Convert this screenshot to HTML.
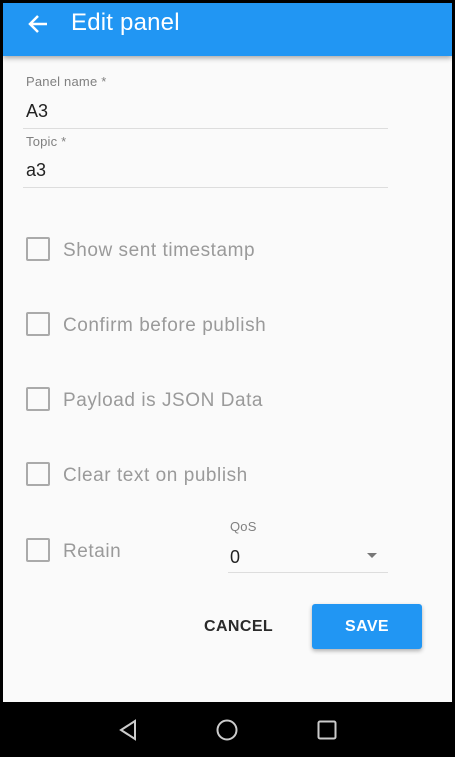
<!DOCTYPE html>
<html><head><style>
*{margin:0;padding:0;box-sizing:border-box}
body{width:455px;height:757px;background:#000;position:relative;overflow:hidden;font-family:"Liberation Sans",sans-serif}
.scr{position:absolute;left:3px;top:3px;width:449px;height:699px;background:#fafafa;overflow:hidden}
.bar{position:absolute;left:0;top:0;width:449px;height:53px;background:#2196f3;box-shadow:0 2px 5px rgba(0,0,0,.35)}
.bar .t{position:absolute;left:68px;top:6px;color:#fff;font-size:24px;letter-spacing:.2px}
.lbl{position:absolute;left:23px;font-size:13px;color:#808080;letter-spacing:.2px}
.val{position:absolute;left:23px;font-size:18px;color:#222}
.line{position:absolute;left:20px;width:365px;height:1px;background:#ddd}
.cb{position:absolute;left:23px;width:24px;height:24px;border:2px solid #aaa;border-radius:2px}
.ct{position:absolute;left:60px;font-size:19px;color:#9a9a9a;letter-spacing:.55px}
.nav{position:absolute;left:0;top:702px;width:455px;height:55px;background:#000}
</style></head><body>
<div class="scr">
<div class="bar">
<svg style="position:absolute;left:24px;top:10px" width="22" height="22" viewBox="0 0 22 22"><path d="M20 11H4M11 3L3 11L11 19" stroke="#fff" stroke-width="2.5" fill="none"/></svg>
<div class="t">Edit panel</div>
</div>
<div class="lbl" style="top:71px">Panel name *</div>
<div class="val" style="top:98px">A3</div>
<div class="line" style="top:125px"></div>
<div class="lbl" style="top:131px">Topic *</div>
<div class="val" style="top:157px">a3</div>
<div class="line" style="top:184px"></div>

<div class="cb" style="top:234px"></div><div class="ct" style="top:237px">Show sent timestamp</div>
<div class="cb" style="top:309px"></div><div class="ct" style="top:312px">Confirm before publish</div>
<div class="cb" style="top:384px"></div><div class="ct" style="top:387px">Payload is JSON Data</div>
<div class="cb" style="top:459px"></div><div class="ct" style="top:462px">Clear text on publish</div>
<div class="cb" style="top:535px"></div><div class="ct" style="top:538px">Retain</div>

<div class="lbl" style="left:227px;top:516px">QoS</div>
<div class="val" style="left:227px;top:544px">0</div>
<svg style="position:absolute;left:364px;top:550px" width="10" height="5"><path d="M0 0H10L5 5Z" fill="#777"/></svg>
<div class="line" style="left:225px;width:160px;top:569px"></div>

<div style="position:absolute;left:201px;top:615px;font-size:16px;font-weight:600;color:#2a2a2a;letter-spacing:.4px">CANCEL</div>
<div style="position:absolute;left:309px;top:601px;width:110px;height:45px;background:#2196f3;border-radius:3px;box-shadow:0 2px 4px rgba(0,0,0,.3);color:#fff;font-size:16px;font-weight:600;text-align:center;line-height:45px;letter-spacing:.4px">SAVE</div>
</div>
<div class="nav">
<svg style="position:absolute;left:118px;top:17px" width="20" height="22"><path d="M17 2L3 11L17 20Z" stroke="#ccc" stroke-width="2" fill="none"/></svg>
<svg style="position:absolute;left:216px;top:17px" width="22" height="22"><circle cx="11" cy="11" r="9.5" stroke="#ccc" stroke-width="2" fill="none"/></svg>
<svg style="position:absolute;left:317px;top:18px" width="20" height="20"><rect x="1.5" y="1.5" width="17" height="17" rx="1.5" stroke="#ccc" stroke-width="2" fill="none"/></svg>
</div>
</body></html>
